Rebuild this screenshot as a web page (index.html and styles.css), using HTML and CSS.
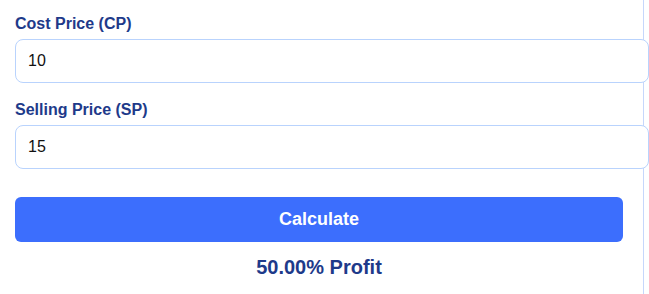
FILE: index.html
```html
<!DOCTYPE html>
<html lang="en">

<head>
    <meta charset="UTF-8" />
    <meta name="viewport" content="width=device-width, initial-scale=1.0" />
    <title>Profit &amp; Loss Calculator</title>
    <link rel="stylesheet" href="styles.css">
</head>

<body>
    <div class="card">
        <div class="input-group">
            <label for="cp">Cost Price (CP)</label>
            <input type="number" id="cp" value="10" />
        </div>

        <div class="input-group">
            <label for="sp">Selling Price (SP)</label>
            <input type="number" id="sp" value="15" />
        </div>

        <button class="calc-btn">Calculate</button>

        <div class="result">50.00% Profit</div>
    </div>
</body>

</html>
```

FILE: styles.css
```css
body {
    font-family: "Liberation Sans", Arial, sans-serif;
    margin: 0;
    background: #ffffff;
    overflow: hidden;
}

.card {
    width: 608px;
    padding: 15px 20px 20px 15px;
    background: #ffffff;
    border-right: 1px solid #c6d7fb;
}

.input-group {
    margin-bottom: 18px;
}

label {
    display: block;
    font-size: 16px;
    line-height: 18px;
    font-weight: bold;
    color: #1e3a8a;
    margin-bottom: 6px;
}

input {
    width: 100%;
    padding: 12px;
    font-size: 16px;
    line-height: 18px;
    font-family: "Liberation Sans", Arial, sans-serif;
    color: #111;
    border: 1px solid #b9d3fd;
    border-radius: 8px;
    background: #fff;
    outline: none;
}

input::-webkit-outer-spin-button,
input::-webkit-inner-spin-button {
    -webkit-appearance: none;
    margin: 0;
}

.calc-btn {
    display: block;
    width: 100%;
    margin-top: 28px;
    padding: 12px;
    font-size: 18px;
    line-height: 21px;
    font-weight: bold;
    font-family: "Liberation Sans", Arial, sans-serif;
    color: #fff;
    background: #3c6efd;
    border: none;
    border-radius: 6px;
    cursor: pointer;
}

.result {
    margin-top: 14px;
    text-align: center;
    font-size: 20px;
    line-height: 23px;
    font-weight: bold;
    color: #1e3a8a;
}
```
